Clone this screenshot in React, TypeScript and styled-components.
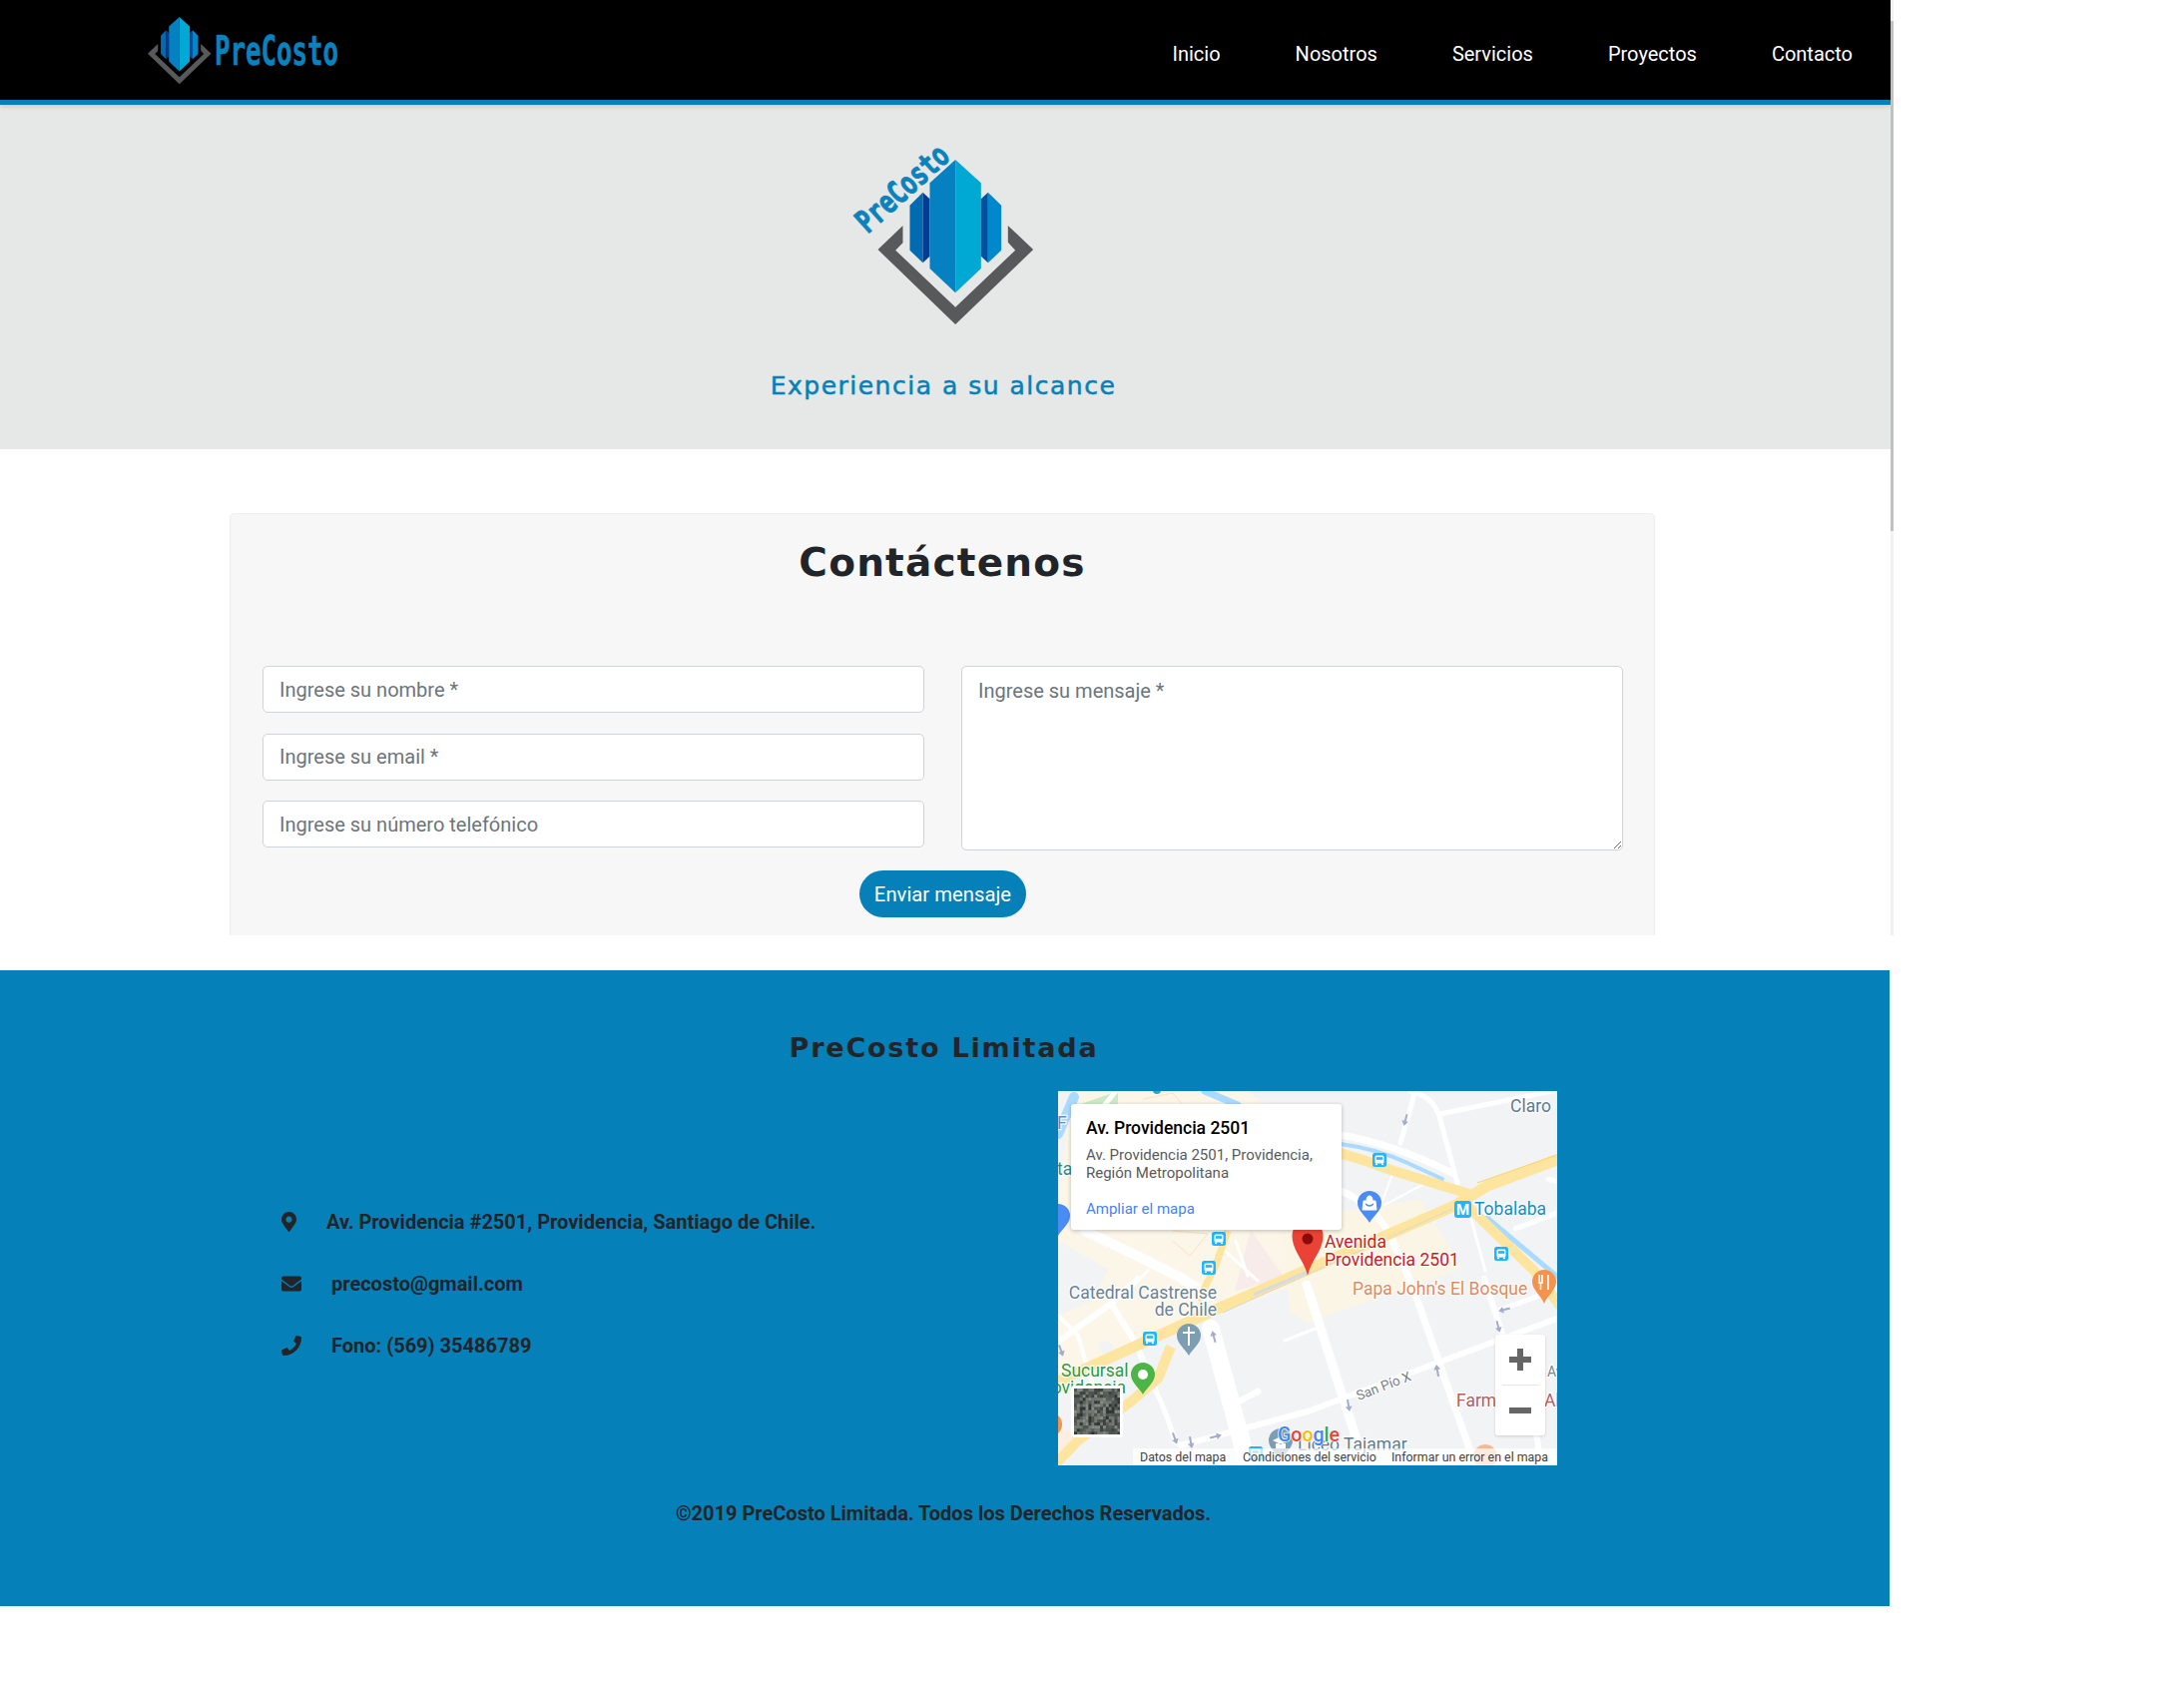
import * as React from 'react'
import styled, { createGlobalStyle } from 'styled-components'
import { FaEnvelope, FaMapMarkerAlt, FaPhone } from 'react-icons/fa'

const BLUE = '#0580b8'
const INK = '#212529'
const WIDE = '"DejaVu Sans", Verdana, sans-serif'
const ROAD = '#fde59f'

const GlobalStyle = createGlobalStyle`
  html, body {
    margin: 0;
    background: #fff;
    font-family: Roboto, Arial, sans-serif;
    color: ${INK};
  }
  * {
    box-sizing: border-box;
  }
`

const Page = styled.div`
  width: 2188px;
  height: 1684px;
  overflow: hidden;
`

const TopFrame = styled.div`
  display: flex;
  align-items: flex-start;
`

const ScrollPane = styled.div`
  width: 1894px;
  height: 937px;
  overflow: hidden;
`

const ScrollTrack = styled.div`
  width: 3px;
  height: 937px;
  padding-top: 21px;
  background: #f1f1f1;
`

const ScrollThumb = styled.div`
  width: 3px;
  height: 511px;
  background: #c1c1c1;
`

const Header = styled.header`
  display: flex;
  align-items: center;
  justify-content: space-between;
  height: 105px;
  padding: 2px 38px 0 148px;
  background: #000;
  border-bottom: 5px solid ${BLUE};
  box-shadow: 0 2px 4px rgba(0, 0, 0, 0.12);
  position: relative;
`

const Nav = styled.nav`
  display: flex;
  gap: 75px;
  margin-top: 5px;
`

const NavLink = styled.a`
  color: #fff;
  font-size: 20px;
  line-height: 30px;
  text-decoration: none;
  font-weight: 400;
`

const Hero = styled.section`
  height: 345px;
  padding-top: 41px;
  background: #e6e7e7;
  text-align: center;
`

const HeroLogo = styled.svg`
  display: block;
  margin: 0 auto;
`

const Tagline = styled.h2`
  margin: 46px 0 0;
  padding-right: 4px;
  font-family: ${WIDE};
  font-size: 25px;
  line-height: 30px;
  font-weight: 400;
  letter-spacing: 1.5px;
  color: ${BLUE};
  -webkit-text-stroke: 0.5px ${BLUE};
`

const Card = styled.section`
  width: 1428px;
  height: 500px;
  margin: 64px 0 0 230px;
  padding: 25px 32px 0;
  background: #f7f7f7;
  border: 1px solid #efefef;
  border-radius: 5px;
`

const CardTitle = styled.h1`
  margin: 0;
  font-family: ${WIDE};
  font-size: 39px;
  line-height: 48px;
  font-weight: 700;
  letter-spacing: 1.2px;
  text-align: center;
  color: ${INK};
`

const FormGrid = styled.form`
  display: grid;
  grid-template-columns: 663px 663px;
  column-gap: 37px;
  margin-top: 79px;
`

const FieldStack = styled.div`
  display: flex;
  flex-direction: column;
  gap: 20.5px;
`

const fieldCss = `
  width: 100%;
  padding: 0 16px;
  font-family: Roboto, Arial, sans-serif;
  font-size: 20px;
  color: #495057;
  background: #fff;
  border: 1px solid #ced4da;
  border-radius: 5px;
  outline: none;
  &::placeholder {
    color: #6c757d;
    opacity: 1;
  }
`

const TextField = styled.input`
  ${fieldCss}
  height: 47px;
`

const MessageField = styled.textarea`
  ${fieldCss}
  display: block;
  height: 185px;
  padding-top: 9px;
  line-height: 30px;
  resize: vertical;
`

const SubmitRow = styled.div`
  grid-column: 1 / 3;
  display: flex;
  justify-content: center;
  margin-top: 20px;
`

const SubmitButton = styled.button`
  width: 167px;
  height: 47px;
  padding: 0;
  font-family: Roboto, Arial, sans-serif;
  font-size: 20.3px;
  font-weight: 400;
  color: #fff;
  background: ${BLUE};
  border: 0;
  border-radius: 24px;
`

const Footer = styled.footer`
  width: 1893px;
  height: 637px;
  margin-top: 35px;
  padding-top: 58px;
  background: ${BLUE};
`

const FooterTitle = styled.h2`
  margin: 0;
  padding-right: 2px;
  font-family: ${WIDE};
  font-size: 27px;
  line-height: 40px;
  font-weight: 700;
  letter-spacing: 1.8px;
  text-align: center;
  color: ${INK};
`

const FooterRow = styled.div`
  display: flex;
  margin-top: 23px;
  padding-left: 282px;
`

const ContactList = styled.ul`
  display: flex;
  flex-direction: column;
  justify-content: center;
  gap: 32px;
  width: 778px;
  margin: 0;
  padding: 11px 0 0;
  list-style: none;
`

const ContactItem = styled.li`
  display: flex;
  align-items: center;
  height: 30px;
  font-size: 20px;
  font-weight: 700;
  color: ${INK};
  svg {
    width: 20px;
    height: 20px;
    margin-right: 30px;
    flex: none;
  }
`

const PinIcon = styled(FaMapMarkerAlt)`
  && {
    width: 15px;
  }
`

const Copyright = styled.p`
  margin: 33px 0 0;
  padding-right: 3px;
  font-size: 20px;
  line-height: 30px;
  font-weight: 700;
  text-align: center;
  color: ${INK};
`

const MapFrame = styled.div`
  position: relative;
  width: 500px;
  height: 375px;
  overflow: hidden;
  background: #f1f3f4;
  svg {
    display: block;
  }
`

const InfoWindow = styled.div`
  position: absolute;
  left: 13px;
  top: 13px;
  width: 271px;
  height: 126px;
  padding: 14px 15px 0;
  background: #fff;
  border-radius: 3px;
  box-shadow: 0 1px 4px rgba(0, 0, 0, 0.25);
`

const InfoTitle = styled.div`
  font-size: 17.5px;
  line-height: 20px;
  font-weight: 500;
  color: #000;
`

const InfoAddress = styled.div`
  margin-top: 8px;
  font-size: 15px;
  line-height: 18px;
  color: #5b5b5b;
`

const InfoLink = styled.a`
  display: block;
  margin-top: 18px;
  font-size: 15px;
  line-height: 18px;
  color: #4285f4;
`

const ZoomBox = styled.div`
  position: absolute;
  left: 438px;
  top: 244px;
  display: flex;
  flex-direction: column;
  align-items: center;
  width: 50px;
  height: 101px;
  background: #fff;
  border-radius: 3px;
  box-shadow: 0 1px 3px rgba(0, 0, 0, 0.15);
`

const ZoomButton = styled.div<{ $plus?: boolean }>`
  position: relative;
  flex: 1;
  width: 100%;
  &::before,
  &::after {
    content: '';
    position: absolute;
    left: 14px;
    top: 22px;
    width: 22px;
    height: 6px;
    background: #666;
  }
  &::after {
    display: ${(props) => (props.$plus ? 'block' : 'none')};
    left: 22px;
    top: 14px;
    width: 6px;
    height: 22px;
  }
`

const ZoomDivider = styled.div`
  width: 37px;
  height: 1px;
  flex: none;
  background: #e6e6e6;
`

const BuildingMark = () => (
  <>
    <polygon points="492,318 417,390 650,615 884,390 808,318 808,368 830,392 650,563 470,392 492,370" fill="#58595b" />
    <polygon points="513,257 552,218 552,430 513,392" fill="#006bb0" />
    <polygon points="552,218 573,238 573,410 552,430" fill="#003f95" />
    <polygon points="650,120 573,190 573,447 650,520" fill="#0580c0" />
    <polygon points="650,120 727,190 727,447 650,520" fill="#00a8d4" />
    <polygon points="727,238 748,218 748,430 727,410" fill="#00509e" />
    <polygon points="748,218 788,257 788,392 748,430" fill="#0088cc" />
  </>
)

const BrandLogo = () => (
  <svg width="192" height="68" viewBox="0 0 192 68">
    <g transform="scale(0.136) translate(-417 -120)">
      <BuildingMark />
    </g>
    <text
      x="67"
      y="48"
      fontFamily='"DejaVu Sans Mono", monospace'
      fontWeight="700"
      fontSize="40"
      fill="#0a82bd"
      stroke="#0a82bd"
      strokeWidth="0.6"
      textLength="124"
      lengthAdjust="spacingAndGlyphs"
    >
      PreCosto
    </text>
  </svg>
)

const BigLogo = () => (
  <HeroLogo width="190" height="180" viewBox="334.5 78 570 540">
    <BuildingMark />
    <text
      transform="translate(386 344) rotate(-42)"
      fontFamily='"DejaVu Sans Mono", monospace'
      fontWeight="700"
      fontSize="96"
      fill="#0a82bd"
      stroke="#0a82bd"
      strokeWidth="3"
      textLength="340"
      lengthAdjust="spacingAndGlyphs"
    >
      PreCosto
    </text>
  </HeroLogo>
)

const Bus = ({ x, y }: { x: number, y: number }) => (
  <g transform={`translate(${x} ${y})`}>
    <rect x="-7" y="-7" width="14" height="14" rx="2.5" fill="#1fb6ff" />
    <rect x="-4.5" y="-4.5" width="9" height="8" rx="1.5" fill="#fff" />
    <rect x="-3.2" y="-2.8" width="6.4" height="2.6" fill="#1fb6ff" />
    <rect x="-4" y="3.5" width="2" height="1.6" fill="#fff" />
    <rect x="2" y="3.5" width="2" height="1.6" fill="#fff" />
  </g>
)

const Arrow = ({ x, y, angle }: { x: number, y: number, angle: number }) => (
  <path
    d="M0 -6 L3.4 -1 L1 -1 L1 6 L-1 6 L-1 -1 L-3.4 -1 Z"
    fill="#a3abcf"
    transform={`translate(${x} ${y}) rotate(${angle})`}
  />
)

const Pin = ({ x, y, color, tip = 20 }: { x: number, y: number, color: string, tip?: number }) => (
  <path
    d={`M${x} ${y + tip} C${x - 3} ${y + 14} ${x - 12} ${y + 8} ${x - 12} ${y} A12 12 0 1 1 ${x + 12} ${y} C${x + 12} ${y + 8} ${x + 3} ${y + 14} ${x} ${y + tip} Z`}
    fill={color}
  />
)

const Label = styled.text<{ $color: string, $size?: number }>`
  font-family: Roboto, Arial, sans-serif;
  font-size: ${(props) => props.$size || 17.5}px;
  fill: ${(props) => props.$color};
  stroke: rgba(255, 255, 255, 0.85);
  stroke-width: 2.5px;
  paint-order: stroke;
`

// satellite thumbnail is only a noisy texture, so a fixed list of tiles is enough
const satelliteColors = ['#4e5450', '#6f7672', '#3e4340', '#858b86', '#585e5a', '#2f3431', '#767a70']
const satelliteTiles = Array.from({ length: 240 }, (_, i) => ({
  x: 16 + (i % 16) * 2.9,
  y: 298 + Math.floor(i / 16) * 3.1,
  fill: satelliteColors[Math.floor(Math.abs(Math.sin(i * 12.9898) * 43758.5)) % 7],
}))

const MapDrawing = () => (
  <svg width="500" height="375" viewBox="0 0 500 375">
    <defs>
      <filter id="satBlur">
        <feGaussianBlur stdDeviation="0.7" />
      </filter>
      <clipPath id="satClip">
        <rect x="16" y="298" width="46" height="46" />
      </clipPath>
    </defs>
    <rect width="500" height="375" fill="#f1f3f4" />

    {/* land use */}
    <polygon points="13,0 190,0 255,50 255,187 150,228 60,262 0,290 0,120" fill="#fbf6e8" />
    <polygon points="0,150 50,178 35,210 0,225" fill="#f1f3f4" />
    <polygon points="40,252 50,250 62,262 48,272" fill="#f1f3f4" />
    <polygon points="225,130 363,108 405,178 250,232 232,222" fill="#faf5e4" />
    <polygon points="193,139 177,200 227,187" fill="#f7ecea" />
    <polygon points="20,14 60,0 60,14 14,72 14,45" fill="#cdeac6" />
    <polygon points="0,340 28,340 0,368" fill="#fdeee0" />
    <path d="M85 8 L115 2 L125 14 M115 140 L150 143 L132 165 L115 150" stroke="#fde0c8" strokeWidth="1" fill="none" />

    {/* water */}
    <g fill="none" stroke="#aadaff" strokeLinecap="round">
      <path d="M0 43 L16 6" strokeWidth="10" />
      <path d="M147 0 L180 14" strokeWidth="7" />
      <path d="M283 53 Q320 58 350 72 L385 88" strokeWidth="4" />
      <path d="M430 127 L505 190" strokeWidth="5" />
    </g>

    {/* minor roads */}
    <g fill="none" stroke="#fff" strokeLinecap="round" strokeLinejoin="round">
      <path d="M353 0 Q375 5 382 25 L400 92" strokeWidth="5" />
      <path d="M383 23 L505 -2" strokeWidth="5" />
      <path d="M358 0 L343 52" strokeWidth="5" />
      <path d="M275 43 Q330 50 395 82" strokeWidth="7" />
      <path d="M367 93 L327 114 M335 83 L325 110" strokeWidth="2" />
      <path d="M283 100 Q320 115 335 150 L355 195 L413 361 L418 380" strokeWidth="7" />
      <path d="M249 194 L307 374" strokeWidth="9" />
      <path d="M153 238 L183 348 L190 380" strokeWidth="18" />
      <path d="M427 188 L440 228 L480 348 L484 380" strokeWidth="6" />
      <path d="M413 125 L428 180" strokeWidth="3" />
      <path d="M123 355 L250 321 L437 251 L505 226" strokeWidth="6" />
      <path d="M97 298 Q110 325 117 351 L123 355" strokeWidth="5" />
      <path d="M437 221 L505 197" strokeWidth="5" />
      <path d="M227 250 L260 237" strokeWidth="3" />
      <path d="M183 310 L200 301" strokeWidth="6" />
      <circle cx="200" cy="301" r="3" fill="#fff" />
      <path d="M0 251 L53 213 L80 188 M53 213 L77 251 L97 298" strokeWidth="6" />
      <path d="M0 225 L20 245 L45 330" strokeWidth="4" />
      <path d="M27 140 L83 167 L123 187 L150 205" strokeWidth="10" />
      <path d="M90 180 L75 195" strokeWidth="3" />
      <path d="M178 150 L190 185 M165 158 L200 190" strokeWidth="3" />
      <path d="M491 88 L505 92 M458 138 L500 122" strokeWidth="5" />
      <path d="M58 0 L45 16" strokeWidth="5" />
    </g>

    {/* highways */}
    <g fill="none" stroke={ROAD} strokeLinecap="butt" strokeLinejoin="round">
      <path d="M-5 293 L160 218 L397 115 L430 95 L505 67" strokeWidth="11" />
      <path d="M230 52 Q280 58 330 78 L415 104" strokeWidth="10" />
      <path d="M410 115 L477 180 L505 218" strokeWidth="10" />
      <path d="M170 140 L157 177 L140 210" strokeWidth="7" />
      <path d="M113 256 L100 288 L73 311 L20 350 L-2 373" strokeWidth="10" />
    </g>
    <path d="M165 222 L395 118" stroke="#d7d8d2" strokeWidth="1" fill="none" />
    <path d="M420 92 L505 62" stroke="#f8d26c" strokeWidth="1" fill="none" />
    <path d="M196 204 L250 181" stroke="#d7dadf" strokeWidth="3" fill="none" />

    <Arrow x={348} y={29} angle={195} />
    <Arrow x={156} y={246} angle={-15} />
    <Arrow x={117} y={348} angle={160} />
    <Arrow x={158} y={346} angle={75} />
    <Arrow x={447} y={219} angle={-105} />
    <Arrow x={441} y={236} angle={165} />
    <Arrow x={380} y={280} angle={-10} />
    <Arrow x={291} y={315} angle={170} />
    <Arrow x={3} y={260} angle={160} />
    <Arrow x={133} y={352} angle={170} />

    <Bus x={161} y={148} />
    <Bus x={151} y={177} />
    <Bus x={322} y={69} />
    <Bus x={444} y={163} />
    <Bus x={92} y={248} />
    <Bus x={198} y={363} />

    {/* place marks */}
    <rect x="397" y="110" width="17" height="17" rx="3" fill="#1fb6ff" />
    <text x="405.5" y="124" textAnchor="middle" fontFamily="Roboto, sans-serif" fontWeight="700" fontSize="15" fill="#fff">M</text>
    <Label x="417" y="124" $color="#1a8dc4">Tobalaba</Label>
    <Label x="453" y="21" $color="#5f7b8c">Claro</Label>
    <Label x="-1" y="38" $color="#5b90c8">F</Label>
    <Label x="-1" y="84" $color="#2b8c8c">ta</Label>

    <Pin x={312} y={112} color="#4a8cf5" />
    <path d="M306 110 L318 110 L319 119 L305 119 Z M309 110 Q309 105 312 105 Q315 105 315 110" fill="#fff" stroke="#fff" strokeWidth="1" />
    <path d="M308 113 Q312 117 316 113" stroke="#4a8cf5" strokeWidth="1.4" fill="none" />

    <Pin x={0} y={125} color="#4a8cf5" />
    <circle cx="99" cy="-1" r="4" fill="#2aa9b5" />

    <Pin x={487} y={191} color="#f4934d" tip={22} />
    <path d="M482 184 L482 193 M485 184 L485 193 M482 192 L485 192 M483.5 192 L483.5 199 M491 184 L491 199" stroke="#fff" strokeWidth="1.6" fill="none" />

    <Label x="295" y="204" $color="#e08a63">Papa John&apos;s El Bosque</Label>
    <Label x="159" y="208" $color="#6a8397" textAnchor="end">Catedral Castrense</Label>
    <Label x="159" y="225" $color="#6a8397" textAnchor="end">de Chile</Label>
    <Pin x={131} y={245} color="#7d9db2" />
    <path d="M131 236 L131 255 M125 242 L137 242" stroke="#fff" strokeWidth="2" fill="none" />

    <Label x="3" y="286" $color="#2e9a3e">Sucursal</Label>
    <Label x="68" y="303" $color="#2e9a3e" textAnchor="end">Providencia</Label>
    <Pin x={85} y={284} color="#4db546" />
    <circle cx="85" cy="284" r="5" fill="#fff" />

    <circle cx="-8" cy="334" r="12" fill="#f4934d" />

    <Pin x={223} y={350} color="#7d9db2" />
    <path d="M215 350 L223 346 L231 350 L223 354 Z M218 353 L218 358 L228 358 L228 353" fill="#fff" />
    <Label x="240" y="360" $color="#5f7b8c">Liceo Tajamar</Label>
    <circle cx="428" cy="366" r="12" fill="#f3b995" />

    <Label x="267" y="157" $color="#c5221f">Avenida</Label>
    <Label x="267" y="175" $color="#c5221f">Providencia 2501</Label>

    <Label x="399" y="316" $color="#b85c5c">Farmacia</Label>
    <Label x="487" y="316" $color="#b85c5c">Ah</Label>
    <Label x="490" y="286" $color="#80868b" $size={14}>Av</Label>
    <Label transform="translate(301 310) rotate(-21)" $color="#7a8085" $size={13.5}>San Pío X</Label>

    {/* marker sits above the labels */}
    <path d="M250 185 C247 170 234.500 160 234.500 145 A15.500 15.500 0 1 1 265.500 145 C265.500 160 253 170 250 185 Z" fill="#ea4335" />
    <circle cx="250" cy="148" r="5.500" fill="#8b0b0b" />

    {/* satellite thumbnail */}
    <rect x="13" y="295" width="52" height="52" rx="3" fill="#fff" />
    <g clipPath="url(#satClip)">
      <rect x="16" y="298" width="46" height="46" fill="#565c58" />
      <g filter="url(#satBlur)">
        {satelliteTiles.map((tile) => (
          <rect key={`${tile.x}-${tile.y}`} x={tile.x} y={tile.y} width="3" height="3.200" fill={tile.fill} />
        ))}
      </g>
    </g>

    {/* attribution */}
    <rect x="75" y="358" width="425" height="17" fill="#fff" opacity="0.7" />
    <text x="220" y="350.500" fontFamily="Roboto, sans-serif" fontWeight="500" fontSize="19.500" stroke="#fff" strokeWidth="1.500" paintOrder="stroke">
      <tspan fill="#4285f4">G</tspan>
      <tspan fill="#ea4335">o</tspan>
      <tspan fill="#fbbc05">o</tspan>
      <tspan fill="#4285f4">g</tspan>
      <tspan fill="#34a853">l</tspan>
      <tspan fill="#ea4335">e</tspan>
    </text>
    <g fontFamily="Roboto, sans-serif" fontSize="12.400" fill="#444">
      <text x="82" y="371">Datos del mapa</text>
      <text x="185" y="371">Condiciones del servicio</text>
      <text x="334" y="371">Informar un error en el mapa</text>
    </g>
  </svg>
)

const navItems = ['Inicio', 'Nosotros', 'Servicios', 'Proyectos', 'Contacto']

const App = () => (
  <Page>
    <GlobalStyle />
    <TopFrame>
      <ScrollPane>
        <Header>
          <BrandLogo />
          <Nav>
            {navItems.map((item) => <NavLink key={item}>{item}</NavLink>)}
          </Nav>
        </Header>
        <Hero>
          <BigLogo />
          <Tagline>Experiencia a su alcance</Tagline>
        </Hero>
        <Card>
          <CardTitle>Contáctenos</CardTitle>
          <FormGrid>
            <FieldStack>
              <TextField placeholder="Ingrese su nombre *" />
              <TextField placeholder="Ingrese su email *" />
              <TextField placeholder="Ingrese su número telefónico" />
            </FieldStack>
            <MessageField placeholder="Ingrese su mensaje *" />
            <SubmitRow>
              <SubmitButton type="button">Enviar mensaje</SubmitButton>
            </SubmitRow>
          </FormGrid>
        </Card>
      </ScrollPane>
      <ScrollTrack>
        <ScrollThumb />
      </ScrollTrack>
    </TopFrame>
    <Footer>
      <FooterTitle>PreCosto Limitada</FooterTitle>
      <FooterRow>
        <ContactList>
          <ContactItem><PinIcon />Av. Providencia #2501, Providencia, Santiago de Chile.</ContactItem>
          <ContactItem><FaEnvelope />precosto@gmail.com</ContactItem>
          <ContactItem><FaPhone />Fono: (569) 35486789</ContactItem>
        </ContactList>
        <MapFrame>
          <MapDrawing />
          <InfoWindow>
            <InfoTitle>Av. Providencia 2501</InfoTitle>
            <InfoAddress>Av. Providencia 2501, Providencia,<br />Región Metropolitana</InfoAddress>
            <InfoLink>Ampliar el mapa</InfoLink>
          </InfoWindow>
          <ZoomBox>
            <ZoomButton $plus />
            <ZoomDivider />
            <ZoomButton />
          </ZoomBox>
        </MapFrame>
      </FooterRow>
      <Copyright>©2019 PreCosto Limitada. Todos los Derechos Reservados.</Copyright>
    </Footer>
  </Page>
)

export default App
